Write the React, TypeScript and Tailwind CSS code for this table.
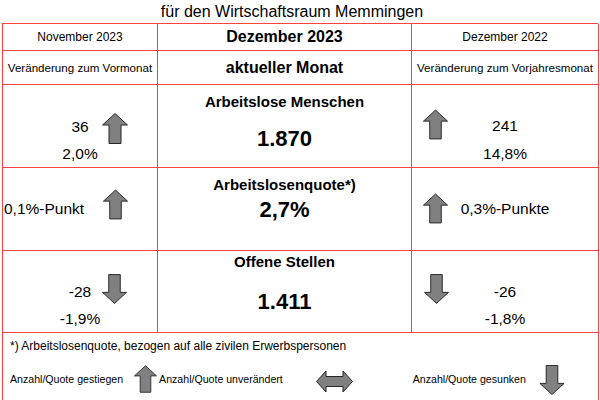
const font = { fontFamily: '"Liberation Sans", Arial, sans-serif' }

function UpArrow({ w = 26, h = 31 }: { w?: number; h?: number }) {
  return (
    <svg width={w} height={h} viewBox="0 0 26 31">
      <polygon
        points="13,0.5 25.5,12 19,12 19,30.5 7,30.5 7,12 0.5,12"
        fill="#808080"
        stroke="#262626"
        strokeWidth="1"
      />
    </svg>
  )
}

function DownArrow({ w = 26, h = 30 }: { w?: number; h?: number }) {
  return (
    <svg width={w} height={h} viewBox="0 0 26 31">
      <polygon
        points="13,30.5 25.5,19 19,19 19,0.5 7,0.5 7,19 0.5,19"
        fill="#808080"
        stroke="#262626"
        strokeWidth="1"
      />
    </svg>
  )
}

function SideArrow() {
  return (
    <svg width="37" height="23" viewBox="0 0 37 23">
      <polygon
        points="0.5,11.5 10,1 10,6.5 27,6.5 27,1 36.5,11.5 27,22 27,16.5 10,16.5 10,22"
        fill="#808080"
        stroke="#262626"
        strokeWidth="1"
      />
    </svg>
  )
}

const cell = 'border-r border-b border-[#ff4040]'

export default function App() {
  return (
    <div className="h-[400px] w-[600px] overflow-hidden bg-white text-black" style={font}>
      <div className="flex h-[23px] items-center justify-center pr-4 text-[16px] leading-none">
        für den Wirtschaftsraum Memmingen
      </div>

      <div className="mx-[2px] grid grid-cols-[155px_254px_187px] grid-rows-[27px_34px_83px_83px_82px_80px] border-l border-t border-[#ff4040]">
        {/* header */}
        <div className={`${cell} flex items-center justify-center text-[12px]`}>November 2023</div>
        <div className={`${cell} flex items-center justify-center text-[16px] font-bold`}>Dezember 2023</div>
        <div className={`${cell} flex items-center justify-center text-[12px]`}>Dezember 2022</div>

        <div className={`${cell} flex items-center justify-center whitespace-nowrap text-[11.6px]`}>
          Veränderung zum Vormonat
        </div>
        <div className={`${cell} flex items-center justify-center text-[16px] font-bold`}>aktueller Monat</div>
        <div className={`${cell} flex items-center justify-center whitespace-nowrap text-[11.6px]`}>
          Veränderung zum Vorjahresmonat
        </div>

        {/* Arbeitslose Menschen */}
        <div className={`${cell} grid`}>
          <div className="col-start-1 row-start-1 mt-[33px] flex flex-col items-center justify-self-center text-[15.5px] leading-[18px]">
            <span>36</span>
            <span className="mt-[9px]">2,0%</span>
          </div>
          <div className="col-start-1 row-start-1 ml-[99px] mt-[28px] self-start justify-self-start">
            <UpArrow />
          </div>
        </div>
        <div className={`${cell} flex flex-col items-center pt-[8px]`}>
          <span className="text-[15px] font-bold leading-[18px]">Arbeitslose Menschen</span>
          <span className="mt-[15px] text-[22px] font-bold leading-[26px]">1.870</span>
        </div>
        <div className={`${cell} grid`}>
          <div className="col-start-1 row-start-1 mt-[32px] flex flex-col items-center justify-self-center text-[15.5px] leading-[18px]">
            <span>241</span>
            <span className="mt-[10px]">14,8%</span>
          </div>
          <div className="col-start-1 row-start-1 ml-[11px] mt-[24px] self-start justify-self-start">
            <UpArrow w={25} h={31} />
          </div>
        </div>

        {/* Arbeitslosenquote */}
        <div className={`${cell} grid`}>
          <div className="col-start-1 row-start-1 ml-[1px] mt-[32px] self-start justify-self-start text-[15.5px] leading-[18px]">
            0,1%-Punkt
          </div>
          <div className="col-start-1 row-start-1 ml-[100px] mt-[21px] self-start justify-self-start">
            <UpArrow w={25} h={31} />
          </div>
        </div>
        <div className={`${cell} flex flex-col items-center pt-[8px]`}>
          <span className="text-[15px] font-bold leading-[18px]">Arbeitslosenquote*)</span>
          <span className="mt-[3px] text-[22px] font-bold leading-[26px]">2,7%</span>
        </div>
        <div className={`${cell} grid`}>
          <div className="col-start-1 row-start-1 mt-[32px] self-start justify-self-center text-[15.5px] leading-[18px]">
            0,3%-Punkte
          </div>
          <div className="col-start-1 row-start-1 ml-[11px] mt-[25px] self-start justify-self-start">
            <UpArrow w={25} h={31} />
          </div>
        </div>

        {/* Offene Stellen */}
        <div className={`${cell} grid`}>
          <div className="col-start-1 row-start-1 mt-[32px] flex flex-col items-center justify-self-center text-[15.5px] leading-[18px]">
            <span>-28</span>
            <span className="mt-[9px]">-1,9%</span>
          </div>
          <div className="col-start-1 row-start-1 ml-[99px] mt-[23px] self-start justify-self-start">
            <DownArrow w={25} h={30} />
          </div>
        </div>
        <div className={`${cell} flex flex-col items-center pt-[2px]`}>
          <span className="text-[15px] font-bold leading-[18px]">Offene Stellen</span>
          <span className="mt-[18px] text-[22px] font-bold leading-[26px]">1.411</span>
        </div>
        <div className={`${cell} grid`}>
          <div className="col-start-1 row-start-1 mt-[32px] flex flex-col items-center justify-self-center text-[15.5px] leading-[18px]">
            <span>-26</span>
            <span className="mt-[9px]">-1,8%</span>
          </div>
          <div className="col-start-1 row-start-1 ml-[12px] mt-[23px] self-start justify-self-start">
            <DownArrow w={25} h={30} />
          </div>
        </div>

        {/* footer */}
        <div className={`${cell} col-span-3 flex flex-col`}>
          <div className="pl-[7px] pt-[6px] text-[12px] leading-[14px]">
            *) Arbeitslosenquote, bezogen auf alle zivilen Erwerbspersonen
          </div>
          <div className="mt-[10px] flex items-center pl-[7px] text-[10.6px] leading-[13px]">
            <span>Anzahl/Quote gestiegen</span>
            <span className="ml-[11px]">
              <UpArrow w={23} h={30} />
            </span>
            <span className="ml-[2px]">Anzahl/Quote unverändert</span>
            <span className="ml-[33px] mt-[4px]">
              <SideArrow />
            </span>
            <span className="ml-[60px]">Anzahl/Quote gesunken</span>
            <span className="ml-[13px] mt-[2px]">
              <DownArrow w={26} h={30} />
            </span>
          </div>
        </div>
      </div>
    </div>
  )
}
